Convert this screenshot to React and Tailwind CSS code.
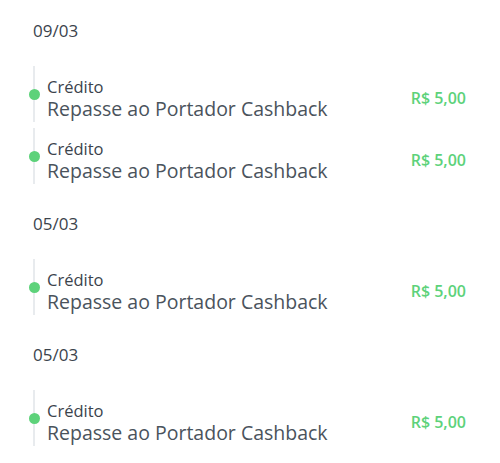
import React from "react";

const groups = [
  { date: "09/03", items: 2 },
  { date: "05/03", items: 1 },
  { date: "05/03", items: 1 },
];

function Row() {
  return (
    <div className="flex h-[56px] items-stretch">
      <div className="relative w-[2px] bg-[#e8ebee]">
        <div className="absolute left-[-4.5px] top-[23px] h-[11px] w-[11px] rounded-full bg-[#5dd27a]" />
      </div>
      <div className="flex flex-1 items-center justify-between pl-[12px] pr-[34px]">
        <div className="flex flex-col pt-[9px]">
          <span className="text-[16.5px] leading-[21px] font-medium text-[#3b434c]">Crédito</span>
          <span className="text-[19.5px] leading-[24px] text-[#4a535c]">
            Repasse ao Portador Cashback
          </span>
        </div>
        <span className="pt-[8px] text-[16px] font-semibold text-[#5dd27a]">R$ 5,00</span>
      </div>
    </div>
  );
}

export default function App() {
  return (
    <div
      className="w-[500px] h-[463px] bg-white pl-[33px] pt-[18px]"
      style={{ fontFamily: '"Open Sans", sans-serif' }}
    >
      {groups.map((g, i) => (
        <div key={i} className="mb-[27px]">
          <div className="h-[24px] pt-[1px] text-[17px] leading-[24px] text-[#3b434c]">{g.date}</div>
          <div className="mt-[24px] flex flex-col gap-[6px]">
            {Array.from({ length: g.items }).map((_, j) => (
              <Row key={j} />
            ))}
          </div>
        </div>
      ))}
    </div>
  );
}
